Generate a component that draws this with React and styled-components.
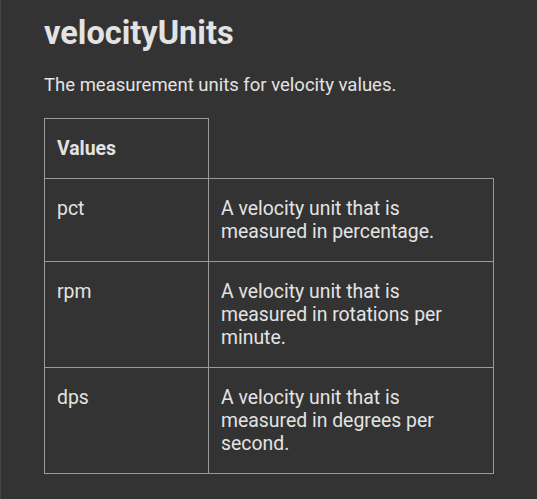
import React from "react";
import styled, { createGlobalStyle } from "styled-components";

const GlobalStyle = createGlobalStyle`
  html, body {
    margin: 0;
    background: #333333;
  }
  body {
    font-family: Roboto, "Noto Sans", sans-serif;
    color: #e3e3e3;
  }
`;

const Page = styled.div`
  width: 537px;
  min-height: 499px;
  box-sizing: border-box;
  padding: 13px 44px 20px 43px;
  border-left: 1px solid #444;
`;

const Title = styled.h1`
  font-size: 32.5px;
  font-weight: 700;
  line-height: 40px;
  margin: 0 0 20px 0;
`;

const Lead = styled.p`
  font-size: 18.5px;
  line-height: 24px;
  margin: 0 0 21px 0;
`;

const Table = styled.table`
  border-collapse: collapse;
  table-layout: fixed;
  width: 450px;
  font-size: 19.4px;
  line-height: 23px;
`;

const HeadCell = styled.th`
  text-align: left;
  font-weight: 700;
  padding: 18px 12px;
  width: ${props => (props.empty ? "auto" : "139px")};
  border: ${props => (props.empty ? "none" : "1px solid #9a9a9a")};
`;

const Cell = styled.td`
  vertical-align: top;
  padding: 18px 11px 18px 12px;
  border: 1px solid #9a9a9a;
`;

const rows = [
  ["pct", "A velocity unit that is measured in percentage."],
  ["rpm", "A velocity unit that is measured in rotations per minute."],
  ["dps", "A velocity unit that is measured in degrees per second."],
];

export default function App() {
  return (
    <>
      <GlobalStyle />
      <Page>
        <Title>velocityUnits</Title>
        <Lead>The measurement units for velocity values.</Lead>
        <Table>
          <thead>
            <tr>
              <HeadCell>Values</HeadCell>
              <HeadCell empty />
            </tr>
          </thead>
          <tbody>
            {rows.map(([name, desc]) => (
              <tr key={name}>
                <Cell>{name}</Cell>
                <Cell>{desc}</Cell>
              </tr>
            ))}
          </tbody>
        </Table>
      </Page>
    </>
  );
}
